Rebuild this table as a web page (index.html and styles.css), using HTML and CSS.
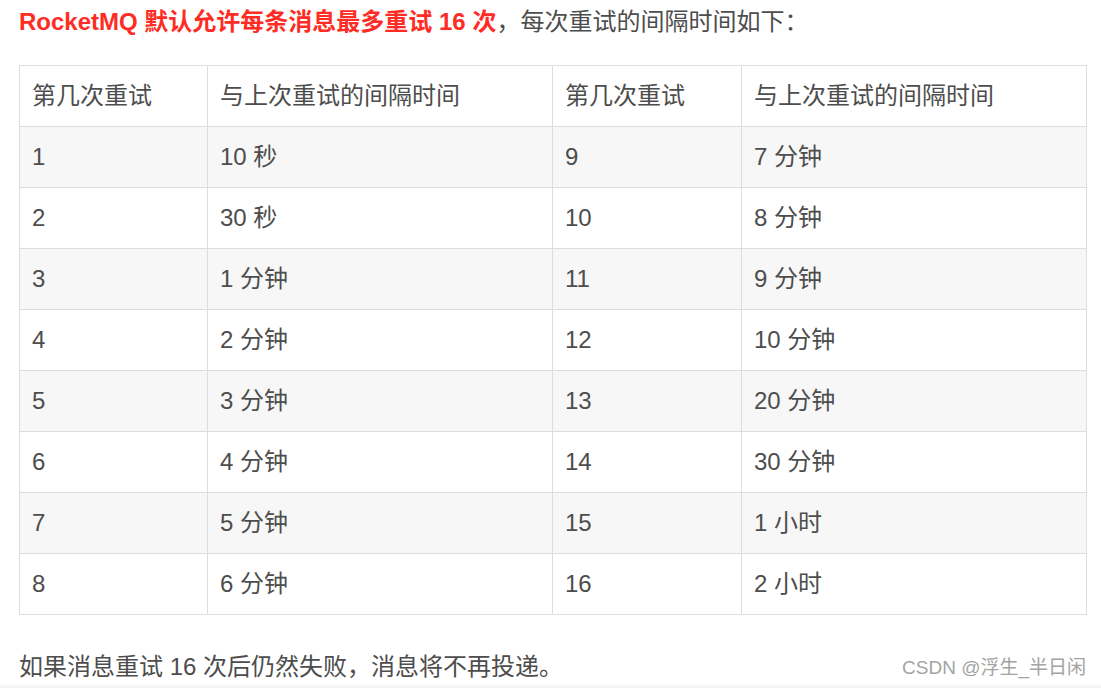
FILE: index.html
```html
<!DOCTYPE html>
<html lang="zh-CN">
<head>
<meta charset="utf-8">
<title>RocketMQ 重试间隔</title>
<link rel="stylesheet" href="styles.css">
</head>
<body>
<main class="article">
  <p class="lead"><strong class="hl">RocketMQ 默认允许每条消息最多重试 16 次</strong>，每次重试的间隔时间如下：</p>
  <table class="retry">
    <colgroup>
      <col class="c-a"><col class="c-int"><col class="c-b"><col class="c-int">
    </colgroup>
    <thead>
      <tr><th>第几次重试</th><th>与上次重试的间隔时间</th><th>第几次重试</th><th>与上次重试的间隔时间</th></tr>
    </thead>
    <tbody>
      <tr><td>1</td><td>10 秒</td><td>9</td><td>7 分钟</td></tr>
      <tr><td>2</td><td>30 秒</td><td>10</td><td>8 分钟</td></tr>
      <tr><td>3</td><td>1 分钟</td><td>11</td><td>9 分钟</td></tr>
      <tr><td>4</td><td>2 分钟</td><td>12</td><td>10 分钟</td></tr>
      <tr><td>5</td><td>3 分钟</td><td>13</td><td>20 分钟</td></tr>
      <tr><td>6</td><td>4 分钟</td><td>14</td><td>30 分钟</td></tr>
      <tr><td>7</td><td>5 分钟</td><td>15</td><td>1 小时</td></tr>
      <tr><td>8</td><td>6 分钟</td><td>16</td><td>2 小时</td></tr>
    </tbody>
  </table>
  <p class="tail">如果消息重试 16 次后仍然失败，消息将不再投递。</p>
  <span class="watermark">CSDN @浮生_半日闲</span>
</main>
</body>
</html>
```

FILE: styles.css
```css
html, body {
  margin: 0;
  padding: 0;
  background: #ffffff;
}
body {
  font-family: "Liberation Sans", "Noto Sans CJK SC", sans-serif;
  color: #4d4d4d;
  font-size: 24px;
  height: 688px;
  overflow: hidden;
  background: linear-gradient(to bottom, #ffffff 0, #ffffff 683px, #f2f2f2 688px);
}
.article {
  position: relative;
  padding: 4px 14px 0 19px;
}
.lead {
  margin: 0;
  line-height: 36px;
}
.hl {
  color: #fe2c24;
  font-weight: bold;
}
.retry {
  margin-top: 25px;
  width: 1067px;
  border-collapse: collapse;
  table-layout: fixed;
}
.c-a { width: 188px; }
.c-b { width: 189px; }
.c-int { width: 345px; }
.retry th, .retry td {
  border: 1px solid #dddddd;
  padding: 12px 12px;
  line-height: 36px;
  text-align: left;
  font-weight: normal;
  white-space: nowrap;
}
.retry tbody tr:nth-child(odd) {
  background: #f7f7f7;
}
.tail {
  margin: 34px 0 0;
  line-height: 36px;
}
.watermark {
  position: absolute;
  right: 15px;
  top: 654px;
  font-size: 19px;
  line-height: 28px;
  color: #a3a3a3;
}
```
